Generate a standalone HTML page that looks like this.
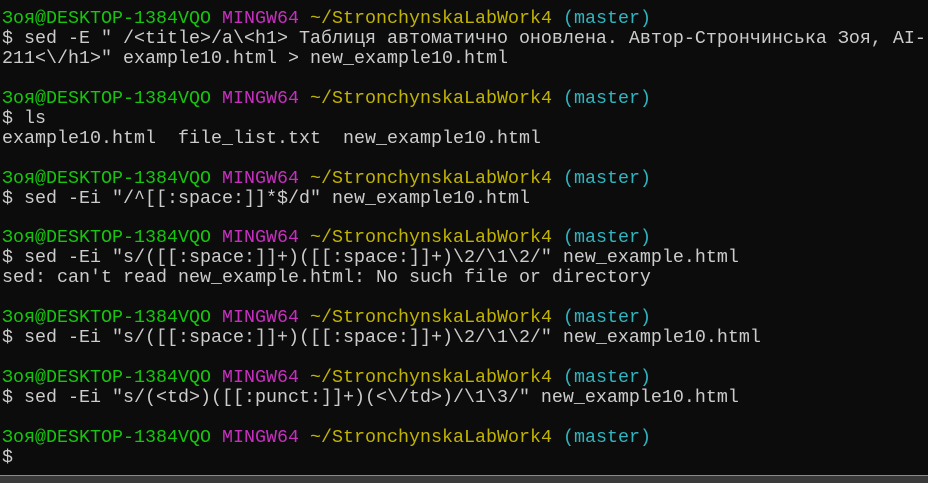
<!DOCTYPE html>
<html><head><meta charset="utf-8"><style>
html,body{margin:0;padding:0;background:#0c0c0c;width:928px;height:482px;overflow:hidden}
pre{margin:0;position:absolute;left:2px;top:9px;font-family:"Liberation Mono","DejaVu Sans Mono",monospace;font-size:18.33px;line-height:19.95px;color:#cccccc;white-space:pre}
.g{color:#16c60c}.m{color:#c72fc0}.y{color:#c1b400}.c{color:#2fb5c0}
.bar{position:absolute;left:0;top:475px;width:928px;height:7px;background:#3a3a3a;border-top:1px solid #8a8a8a}
</style></head><body>
<pre><span class="g">Зоя@DESKTOP-1384VQO</span> <span class="m">MINGW64</span> <span class="y">~/StronchynskaLabWork4</span> <span class="c">(master)</span>
$ sed -E " /&lt;title&gt;/a\&lt;h1&gt; Таблиця автоматично оновлена. Автор-Стрончинська Зоя, AI-
211&lt;\/h1&gt;" example10.html &gt; new_example10.html

<span class="g">Зоя@DESKTOP-1384VQO</span> <span class="m">MINGW64</span> <span class="y">~/StronchynskaLabWork4</span> <span class="c">(master)</span>
$ ls
example10.html  file_list.txt  new_example10.html

<span class="g">Зоя@DESKTOP-1384VQO</span> <span class="m">MINGW64</span> <span class="y">~/StronchynskaLabWork4</span> <span class="c">(master)</span>
$ sed -Ei "/^[[:space:]]*$/d" new_example10.html

<span class="g">Зоя@DESKTOP-1384VQO</span> <span class="m">MINGW64</span> <span class="y">~/StronchynskaLabWork4</span> <span class="c">(master)</span>
$ sed -Ei "s/([[:space:]]+)([[:space:]]+)\2/\1\2/" new_example.html
sed: can't read new_example.html: No such file or directory

<span class="g">Зоя@DESKTOP-1384VQO</span> <span class="m">MINGW64</span> <span class="y">~/StronchynskaLabWork4</span> <span class="c">(master)</span>
$ sed -Ei "s/([[:space:]]+)([[:space:]]+)\2/\1\2/" new_example10.html

<span class="g">Зоя@DESKTOP-1384VQO</span> <span class="m">MINGW64</span> <span class="y">~/StronchynskaLabWork4</span> <span class="c">(master)</span>
$ sed -Ei "s/(&lt;td&gt;)([[:punct:]]+)(&lt;\/td&gt;)/\1\3/" new_example10.html

<span class="g">Зоя@DESKTOP-1384VQO</span> <span class="m">MINGW64</span> <span class="y">~/StronchynskaLabWork4</span> <span class="c">(master)</span>
$</pre>
<div class="bar"></div>
</body></html>
